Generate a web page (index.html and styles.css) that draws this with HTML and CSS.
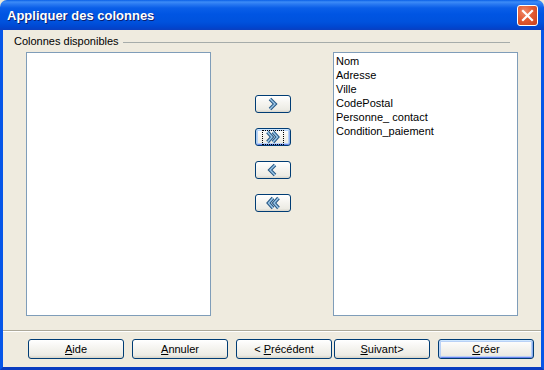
FILE: index.html
```html
<!DOCTYPE html>
<html>
<head>
<meta charset="utf-8">
<link rel="stylesheet" href="styles.css">
</head>
<body>
<div class="window">
  <div class="titlebar">
    <span class="title">Appliquer des colonnes</span>
    <span class="close">
      <svg width="13" height="13" viewBox="0 0 13 13"><path d="M2 2 L11 11 M11 2 L2 11" stroke="#fff" stroke-width="2.2" stroke-linecap="square"/></svg>
    </span>
  </div>
  <div class="client">
    <div class="group-head">
      <span class="legend">Colonnes disponibles</span>
      <span class="group-line"></span>
    </div>
    <div class="lists">
      <div class="listbox"></div>
      <div class="mid">
        <button class="arrow">
          <svg width="11" height="14" viewBox="0 0 11 14"><path d="M3 2 L8 7 L3 12" fill="none" stroke="#2a5a86" stroke-width="3.6"/><path d="M3 2 L8 7 L3 12" fill="none" stroke="#9cc8ea" stroke-width="1.4"/></svg>
        </button>
        <button class="arrow focused">
          <span class="focus">
            <svg width="16" height="14" viewBox="0 0 16 14"><path d="M2.5 2 L7 7 L2.5 12 M8 2 L12.5 7 L8 12" fill="none" stroke="#2a5a86" stroke-width="3.6"/><path d="M2.5 2 L7 7 L2.5 12 M8 2 L12.5 7 L8 12" fill="none" stroke="#9cc8ea" stroke-width="1.4"/></svg>
          </span>
        </button>
        <button class="arrow">
          <svg width="11" height="14" viewBox="0 0 11 14"><path d="M8 2 L3 7 L8 12" fill="none" stroke="#2a5a86" stroke-width="3.6"/><path d="M8 2 L3 7 L8 12" fill="none" stroke="#9cc8ea" stroke-width="1.4"/></svg>
        </button>
        <button class="arrow">
          <svg width="16" height="14" viewBox="0 0 16 14"><path d="M8 2 L3.5 7 L8 12 M13.5 2 L9 7 L13.5 12" fill="none" stroke="#2a5a86" stroke-width="3.6"/><path d="M8 2 L3.5 7 L8 12 M13.5 2 L9 7 L13.5 12" fill="none" stroke="#9cc8ea" stroke-width="1.4"/></svg>
        </button>
      </div>
      <div class="listbox">
        <div class="item">Nom</div>
        <div class="item">Adresse</div>
        <div class="item">Ville</div>
        <div class="item">CodePostal</div>
        <div class="item">Personne_ contact</div>
        <div class="item">Condition_paiement</div>
      </div>
    </div>
    <div class="separator"></div>
    <div class="buttons">
      <button class="btn"><u>A</u>ide</button>
      <button class="btn"><u>A</u>nnuler</button>
      <button class="btn">&lt; <u>P</u>récédent</button>
      <button class="btn tight"><u>S</u>uivant&gt;</button>
      <button class="btn default"><u>C</u>réer</button>
    </div>
  </div>
</div>
</body>
</html>
```
FILE: styles.css
```css
html, body {
  margin: 0;
  padding: 0;
  background: #ece9d8;
}
.window {
  width: 544px;
  height: 370px;
  display: flex;
  flex-direction: column;
  font-family: "Liberation Sans", Arial, sans-serif;
  font-size: 11px;
  color: #000;
}
.titlebar {
  height: 30px;
  flex: none;
  display: flex;
  align-items: center;
  justify-content: space-between;
  padding: 0 6px 0 7px;
  box-sizing: border-box;
  border-radius: 7px 7px 0 0;
  background: linear-gradient(to bottom, #0a5fe6 0px, #3d8cf7 2px, #2a7af2 4px, #0a5ee8 8px, #0055e3 14px, #0052dd 22px, #0046d0 27px, #0a3fc0 30px);
}
.title {
  color: #fff;
  font-weight: bold;
  font-size: 13px;
  text-shadow: 1px 1px 0 #0a1e6e;
  padding-top: 1px;
}
.close {
  width: 21px;
  height: 21px;
  box-sizing: border-box;
  border: 1px solid #fff;
  border-radius: 3px;
  background: radial-gradient(circle at 35% 30%, #f08a6a 0%, #e35b32 45%, #c8401c 100%);
  display: flex;
  align-items: center;
  justify-content: center;
  margin-top: 1px;
}
.client {
  flex: 1;
  display: flex;
  flex-direction: column;
  border-left: 3px solid #0656e8;
  border-right: 3px solid #0656e8;
  border-bottom: 3px solid #0a3cc0;
  background: #efebdf;
}
.group-head {
  display: flex;
  align-items: center;
  height: 13px;
  margin-top: 5px;
  padding-left: 11px;
  padding-right: 31px;
}
.legend {
  white-space: nowrap;
  line-height: 13px;
}
.group-line {
  flex: 1;
  height: 1px;
  background: #a6acaa;
  margin-left: 4px;
  margin-top: 1px;
}
.lists {
  display: flex;
  margin-top: 4px;
  padding-left: 23px;
  height: 264px;
}
.listbox {
  width: 185px;
  height: 264px;
  box-sizing: border-box;
  border: 1px solid #7f9db9;
  background: #fff;
  padding: 1px 2px;
}
.item {
  line-height: 14px;
  height: 14px;
  white-space: nowrap;
}
.mid {
  width: 122px;
  display: flex;
  flex-direction: column;
  align-items: center;
  padding-top: 43px;
  gap: 15px;
}
button {
  font-family: inherit;
  font-size: 11px;
  color: #000;
  margin: 0;
  padding: 0;
  cursor: default;
}
.arrow {
  width: 36px;
  height: 18px;
  box-sizing: border-box;
  border: 1px solid #003c74;
  border-radius: 3px;
  background: linear-gradient(to bottom, #ffffff 0%, #f6f5f1 40%, #ecebe4 85%, #d8d5cb 100%);
  display: flex;
  align-items: center;
  justify-content: center;
  margin-left: 1px;
}
.arrow svg {
  display: block;
}
.arrow.focused {
  box-shadow: inset 0 1px 0 #cee7ff, inset 1px 0 0 #a8caf5, inset -1px 0 0 #8aacf0, inset 0 -1px 0 #6982ee, inset 0 0 0 2px #b7d3f7;
}
.focus {
  display: flex;
  align-items: center;
  justify-content: center;
  width: 20px;
  height: 13px;
  outline: 1px dotted #000;
}
.separator {
  margin-top: 14px;
  height: 1px;
  background: #aca899;
  border-bottom: 1px solid #fff;
}
.buttons {
  display: flex;
  margin-top: 7px;
  padding-left: 25px;
  gap: 8px;
}
.btn {
  width: 96px;
  height: 20px;
  box-sizing: border-box;
  border: 1px solid #003c74;
  border-radius: 3px;
  background: linear-gradient(to bottom, #ffffff 0%, #f6f5f1 40%, #ecebe4 85%, #d6d2c6 100%);
  text-align: center;
  line-height: 17px;
}
.btn.tight {
  margin-left: -6px;
}
.btn.default {
  box-shadow: inset 0 1px 0 #cee7ff, inset 1px 0 0 #bcd4f6, inset -1px 0 0 #89adf0, inset 0 -1px 0 #6982ee, inset 0 0 0 2px #b9d1f6;
}
u {
  text-decoration: underline;
  text-underline-offset: 1px;
}
```
